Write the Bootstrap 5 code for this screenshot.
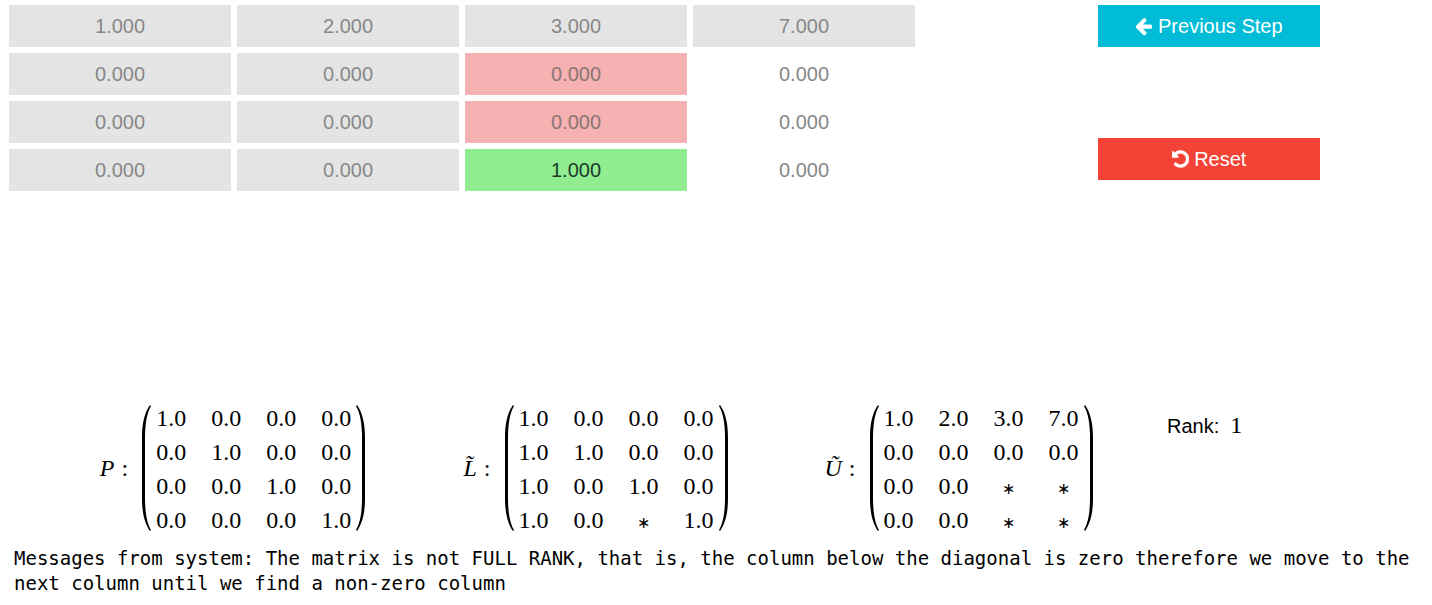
<!DOCTYPE html>
<html lang="en">
<head>
<meta charset="utf-8">
<meta name="viewport" content="width=device-width, initial-scale=1">
<title>PLU factorization</title>
<link href="https://cdn.jsdelivr.net/npm/bootstrap@5.3.0/dist/css/bootstrap.min.css" rel="stylesheet">
<style>
  body { font-family: "Liberation Sans", Arial, sans-serif; font-size: 20px; color: #000; background: #fff; }

  /* working matrix and step controls */
  .stepper { display: grid; grid-template-columns: 906fr 183fr 222fr 112fr; padding: 5px 0 0 9px; margin-bottom: 210px; }
  .work-matrix { display: grid; grid-template-columns: repeat(4, 1fr); gap: 6px; }
  .cell-input, .step-btn { height: 42px; border-radius: 0; font-size: 20px; line-height: 30px; }
  .work-matrix .cell-input { border: 0; padding: 6px; color: #888; background: #fff; text-align: center; opacity: 1; }
  .work-matrix .done { background: #e4e4e4; }
  .work-matrix .below { background: #f6b2b2; color: #8a7474; }
  .work-matrix .pivot { background: #90ee90; color: #1c3a2a; }
  .controls { grid-column: 3; gap: 91px; }
  .step-btn { border: 0; padding: 0; color: #fff; }
  .step-btn:hover { color: #fff; }
  .btn-prev, .btn-prev:hover { background: #00bcd7; }
  .btn-reset, .btn-reset:hover { background: #f44336; }
  .step-btn svg { width: 17px; height: 20px; vertical-align: -3px; fill: currentColor; }

  /* resulting factors */
  .factors { display: grid; grid-template-columns: 363fr 363fr 363fr 292fr; padding-left: 51px; }
  .math { font-family: "Liberation Serif", "Times New Roman", serif; font-size: 24px; line-height: 34px; }
  .math-label { margin-right: 14px; padding-bottom: 3px; }
  .math-label i { margin-right: 1px; }
  .paren { width: 9px; height: 126px; margin-bottom: 2px; }
  .entries { margin: 0 5px; }
  .entries td { padding: 0; min-width: 30px; text-align: center; }
  .entries td + td { padding-left: 25px; }
  .unset { font-size: 16px; line-height: 16px; }
  .rank-box { padding: 7px 0 0 27px; line-height: 34px; }

  .messages { font-family: "DejaVu Sans Mono", Consolas, monospace; font-size: 19px; line-height: 25px; margin: 9px 8px 0 14px; }
</style>
</head>
<body>
<main>
  <section class="stepper">
    <div class="work-matrix">
      <input class="form-control cell-input done" aria-label="Row 1 column 1" value="1.000" disabled>
      <input class="form-control cell-input done" aria-label="Row 1 column 2" value="2.000" disabled>
      <input class="form-control cell-input done" aria-label="Row 1 column 3" value="3.000" disabled>
      <input class="form-control cell-input done" aria-label="Row 1 column 4" value="7.000" disabled>
      <input class="form-control cell-input done" aria-label="Row 2 column 1" value="0.000" disabled>
      <input class="form-control cell-input done" aria-label="Row 2 column 2" value="0.000" disabled>
      <input class="form-control cell-input below" aria-label="Row 2 column 3" value="0.000" disabled>
      <input class="form-control cell-input" aria-label="Row 2 column 4" value="0.000" disabled>
      <input class="form-control cell-input done" aria-label="Row 3 column 1" value="0.000" disabled>
      <input class="form-control cell-input done" aria-label="Row 3 column 2" value="0.000" disabled>
      <input class="form-control cell-input below" aria-label="Row 3 column 3" value="0.000" disabled>
      <input class="form-control cell-input" aria-label="Row 3 column 4" value="0.000" disabled>
      <input class="form-control cell-input done" aria-label="Row 4 column 1" value="0.000" disabled>
      <input class="form-control cell-input done" aria-label="Row 4 column 2" value="0.000" disabled>
      <input class="form-control cell-input pivot" aria-label="Row 4 column 3" value="1.000" readonly>
      <input class="form-control cell-input" aria-label="Row 4 column 4" value="0.000" disabled>
    </div>
    <div class="controls d-flex flex-column">
      <button type="button" class="btn step-btn btn-prev w-100"><svg viewBox="0 0 1536 1792" aria-hidden="true"><path d="M1536 896v128q0 53-32.500 90.500t-84.500 37.500h-704l293 294q38 36 38 90t-38 90l-75 76q-37 37-90 37-52 0-91-37l-651-652q-37-37-37-90 0-52 37-91l651-650q38-38 91-38 52 0 90 38l75 74q38 38 38 91t-38 91l-293 293h704q52 0 84.500 37.500t32.500 90.500z"/></svg> Previous Step</button>
      <button type="button" class="btn step-btn btn-reset w-100"><svg viewBox="128 0 1536 1792" aria-hidden="true"><path d="M1664 896q0 156-61 298t-164 245-245 164-298 61q-172 0-327-72.500t-264-204.500q-7-10-6.500-22.500t8.500-20.500l137-138q10-9 25-9 16 2 23 12 73 95 179 147t225 52q104 0 198.500-40.500t163.500-109.500 109.500-163.500 40.500-198.500-40.500-198.500-109.500-163.500-163.500-109.500-198.500-40.500q-98 0-188 35.500t-160 101.500l137 138q31 30 14 69-17 40-59 40h-448q-26 0-45-19t-19-45v-448q0-42 40-59 39-17 69 14l130 129q107-101 244.500-156.500t284.500-55.500q156 0 298 61t245 164 164 245 61 298z" stroke="currentColor" stroke-width="50"/></svg> Reset</button>
    </div>
  </section>

  <section class="factors">
    <div class="math d-flex justify-content-center align-items-center">
      <span class="math-label"><i>P</i> :</span>
      <svg class="paren" viewBox="0 0 9 126" aria-hidden="true"><path d="M8 0C3 7 0 17 0 33V93C0 109 3 119 8 126L9 125C5 118 3 108 3 93V33C3 18 5 8 9 1Z"/></svg>
      <table class="entries">
        <tr><td>1.0</td><td>0.0</td><td>0.0</td><td>0.0</td></tr>
        <tr><td>0.0</td><td>1.0</td><td>0.0</td><td>0.0</td></tr>
        <tr><td>0.0</td><td>0.0</td><td>1.0</td><td>0.0</td></tr>
        <tr><td>0.0</td><td>0.0</td><td>0.0</td><td>1.0</td></tr>
      </table>
      <svg class="paren" viewBox="0 0 9 126" aria-hidden="true"><path d="M1 0C6 7 9 17 9 33V93C9 109 6 119 1 126L0 125C4 118 6 108 6 93V33C6 18 4 8 0 1Z"/></svg>
    </div>
    <div class="math d-flex justify-content-center align-items-center">
      <span class="math-label"><i>L&#771;</i> :</span>
      <svg class="paren" viewBox="0 0 9 126" aria-hidden="true"><path d="M8 0C3 7 0 17 0 33V93C0 109 3 119 8 126L9 125C5 118 3 108 3 93V33C3 18 5 8 9 1Z"/></svg>
      <table class="entries">
        <tr><td>1.0</td><td>0.0</td><td>0.0</td><td>0.0</td></tr>
        <tr><td>1.0</td><td>1.0</td><td>0.0</td><td>0.0</td></tr>
        <tr><td>1.0</td><td>0.0</td><td>1.0</td><td>0.0</td></tr>
        <tr><td>1.0</td><td>0.0</td><td><span class="unset">∗</span></td><td>1.0</td></tr>
      </table>
      <svg class="paren" viewBox="0 0 9 126" aria-hidden="true"><path d="M1 0C6 7 9 17 9 33V93C9 109 6 119 1 126L0 125C4 118 6 108 6 93V33C6 18 4 8 0 1Z"/></svg>
    </div>
    <div class="math d-flex justify-content-center align-items-center">
      <span class="math-label"><i>Ũ</i> :</span>
      <svg class="paren" viewBox="0 0 9 126" aria-hidden="true"><path d="M8 0C3 7 0 17 0 33V93C0 109 3 119 8 126L9 125C5 118 3 108 3 93V33C3 18 5 8 9 1Z"/></svg>
      <table class="entries">
        <tr><td>1.0</td><td>2.0</td><td>3.0</td><td>7.0</td></tr>
        <tr><td>0.0</td><td>0.0</td><td>0.0</td><td>0.0</td></tr>
        <tr><td>0.0</td><td>0.0</td><td><span class="unset">∗</span></td><td><span class="unset">∗</span></td></tr>
        <tr><td>0.0</td><td>0.0</td><td><span class="unset">∗</span></td><td><span class="unset">∗</span></td></tr>
      </table>
      <svg class="paren" viewBox="0 0 9 126" aria-hidden="true"><path d="M1 0C6 7 9 17 9 33V93C9 109 6 119 1 126L0 125C4 118 6 108 6 93V33C6 18 4 8 0 1Z"/></svg>
    </div>
    <div class="rank-box">Rank:&nbsp; <span class="math">1</span></div>
  </section>

  <p class="messages">Messages from system: The matrix is not FULL RANK, that is, the column below the diagonal is zero therefore we move to the next column until we find a non-zero column</p>
</main>
<script src="https://cdn.jsdelivr.net/npm/bootstrap@5.3.0/dist/js/bootstrap.bundle.min.js"></script>
</body>
</html>
